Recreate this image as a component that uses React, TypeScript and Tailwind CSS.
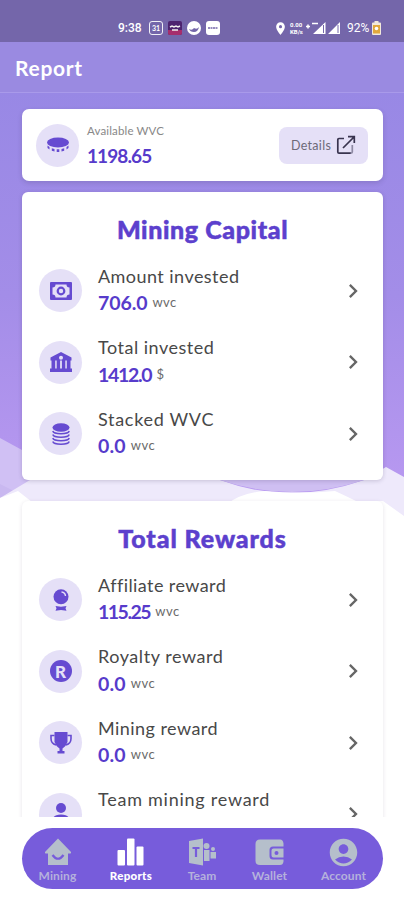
import type { ReactNode } from "react";
import { MdAccountCircle, MdChevronRight, MdLocationOn } from "react-icons/md";

type Item = { label: string; value?: string; unit?: string; icon: ReactNode; tracking: string; valueTracking?: string };

const CoinIcon = () => (
  <svg width="24" height="18" viewBox="0 0 24 18" fill="currentColor">
    <ellipse cx="12" cy="6.500" rx="11" ry="5" />
    <path d="M1.500 9.500v2.500l2 1.500v-2.500zM5.800 12.300v2.500l2.700.8v-2.500zM10.700 13.300v2.700h2.600v-2.700zM15.500 13.100v2.500l2.700-.8v-2.500zM20.500 11v2.500l2-1.500v-2.500z" />
  </svg>
);

const ShareIcon = () => (
  <svg width="20" height="20" viewBox="0 0 20 20" fill="none" stroke="#39344f" strokeWidth="1.7">
    <path d="M8 3.500H3Q1.800 3.500 1.800 4.700V17Q1.800 18.200 3 18.200H15" />
    <path d="M14.500 18.200Q16.300 18.200 16.300 17V10" stroke="#8d89a3" />
    <path d="M7 13L18 2M12 1.700h6.300V8" />
  </svg>
);

const CashIcon = () => (
  <svg width="22" height="18" viewBox="0 0 22 18">
    <rect width="22" height="18" rx="1" fill="#664bd1" />
    <path d="M5.500 2.500h11a3 3 0 0 0 3 3v7a3 3 0 0 0-3 3h-11a3 3 0 0 0-3-3v-7a3 3 0 0 0 3-3z" fill="#e5e0f7" />
    <circle cx="11" cy="9" r="3.300" fill="none" stroke="#664bd1" strokeWidth="2.200" />
  </svg>
);

const BankIcon = () => (
  <svg width="22" height="20" viewBox="0 0 22 20" fill="currentColor">
    <path fillRule="evenodd" d="M11 0L21.500 5.500V8.500H.5V5.500zM11 3.700a2 2 0 1 0 0 4 2 2 0 0 0 0-4z" />
    <path d="M1.500 8h3.700v9H1.500zM6.700 8h3.400v9H6.700zM11.900 8h3.400v9h-3.400zM16.800 8h3.700v9h-3.700zM0 16.500h22V20H0z" />
  </svg>
);

const StackIcon = () => (
  <svg width="18" height="22" viewBox="0 0 18 22" fill="none" stroke="currentColor" strokeWidth="1.500">
    <ellipse cx="9" cy="4.500" rx="8.500" ry="4.300" fill="currentColor" stroke="none" />
    <path d="M.8 8c1 3.600 15.400 3.600 16.400 0M.8 11.500c1 3.600 15.400 3.600 16.400 0M.8 15c1 3.600 15.400 3.600 16.400 0M.8 18.500c1 3.600 15.400 3.600 16.400 0" />
  </svg>
);

const BadgeIcon = () => (
  <svg width="16" height="22" viewBox="0 0 16 22" fill="currentColor">
    <circle cx="8" cy="7.700" r="7.500" />
    <path d="M8.500 3q3.700.5 4 4" fill="none" stroke="#e5e0f7" strokeWidth="1.400" />
    <path d="M2.500 17l5.500.8 5.500-.8-1 2.200 1 2.500-5.500-.8-5.500.8 1-2.500z" />
  </svg>
);

const RoyaltyIcon = () => (
  <span className="flex size-[22px] items-center justify-center rounded-full bg-[#664bd1] font-['Lato'] text-[17px] leading-none font-black text-[#e5e0f7]">
    R
  </span>
);

const TrophyIcon = () => (
  <svg width="22" height="22" viewBox="0 0 22 22" fill="currentColor">
    <path d="M4.500 0h13v10q-1.500 4.500-5 6.500v2.500h2v2.500H7.500V19h2v-2.500q-3.500-2-5-6.500z" />
    <path d="M4.500 3.500H1v3q0 5 5 6.500M17.500 3.500H21v3q0 5-5 6.500" fill="none" stroke="currentColor" strokeWidth="1.600" />
  </svg>
);

const PersonIcon = () => (
  <svg width="22" height="22" viewBox="0 0 22 22" fill="currentColor">
    <circle cx="11" cy="5" r="5" />
    <path d="M3 22v-6.500q1-4 8-4t8 4V22z" />
  </svg>
);

const capital: Item[] = [
  { label: "Amount invested", value: "706.0", unit: "wvc", icon: <CashIcon />, tracking: "tracking-[0.45px]", valueTracking: "tracking-[-0.1px]" },
  { label: "Total invested", value: "1412.0", unit: "$", icon: <BankIcon />, tracking: "tracking-[0.5px]", valueTracking: "tracking-[-1.3px]" },
  { label: "Stacked WVC", value: "0.0", unit: "wvc", icon: <StackIcon />, tracking: "tracking-[0.7px]", valueTracking: "tracking-[0.2px]" },
];

const rewards: Item[] = [
  { label: "Affiliate reward", value: "115.25", unit: "wvc", icon: <BadgeIcon />, tracking: "tracking-[0.42px]", valueTracking: "tracking-[-1.5px]" },
  { label: "Royalty reward", value: "0.0", unit: "wvc", icon: <RoyaltyIcon />, tracking: "tracking-[0.55px]", valueTracking: "tracking-[0.2px]" },
  { label: "Mining reward", value: "0.0", unit: "wvc", icon: <TrophyIcon />, tracking: "tracking-[0.45px]", valueTracking: "tracking-[0.2px]" },
  { label: "Team mining reward", icon: <PersonIcon />, tracking: "tracking-[0.75px]" },
];

function Row({ item }: { item: Item }) {
  return (
    <div className="flex h-[71.5px] items-center pr-[16px] pl-[17px]">
      <div className="flex size-[43px] shrink-0 items-center justify-center rounded-full bg-[#e5e0f7] text-[#664bd1]">
        {item.icon}
      </div>
      <div className="ml-4 h-[54px] flex-1 whitespace-nowrap">
        <div className={`text-[18px] leading-[25px] text-[#484848] ${item.tracking}`}>{item.label}</div>
        {item.value && (
          <div className="flex h-[28px] items-center">
            <span className={`text-[19.5px] font-bold text-[#573bcb] ${item.valueTracking}`}>{item.value}</span>
            <span className="ml-[5px] text-[13px] tracking-[0.5px] text-[#6a6a6a]">{item.unit}</span>
          </div>
        )}
      </div>
      <MdChevronRight size={28} className="text-[#666]" />
    </div>
  );
}

const navItems = [
  {
    label: "Mining",
    width: "w-[71px]",
    icon: (
      <svg width="28" height="28" viewBox="0 0 28 28" fill="#b5bfcb">
        <path d="M14 .5L27 14q.5 1.500-1 1.500h-2V27H4V15.500H2q-1.500 0-1-1.500z" />
        <path d="M8.500 17q5.500 7.500 11 0" fill="none" stroke="#775cdb" strokeWidth="2.200" />
      </svg>
    ),
  },
  {
    label: "Reports",
    width: "w-[76px]",
    icon: (
      <svg width="28" height="28" viewBox="0 0 28 28" fill="#fff">
        <rect x="0.500" y="12" width="7.500" height="15.500" rx="1" />
        <rect x="10" y="0.500" width="7.500" height="27" rx="1" />
        <rect x="19.500" y="8.500" width="7" height="19" rx="1" />
      </svg>
    ),
  },
  {
    label: "Team",
    width: "w-[66px]",
    icon: (
      <svg width="29" height="28" viewBox="0 0 29 28" fill="#b5bfcb">
        <path d="M1 3L15 .5v27L1 25z" />
        <path d="M4.500 10h7M8 10v9" stroke="#775cdb" strokeWidth="2.200" />
        <circle cx="18.500" cy="8" r="3" />
        <path d="M16 12h5.500v11h-5.500zM22.500 14h5.500v6.500h-5.500z" />
        <circle cx="25" cy="11" r="2" />
      </svg>
    ),
  },
  {
    label: "Wallet",
    width: "w-[69px]",
    icon: (
      <svg width="29" height="28" viewBox="0 0 29 28" fill="#b5bfcb">
        <path d="M5 1.500h20q3 0 3.500 4v3H18q-3.500 0-3.500 3.500v6Q14.500 21.500 18 21.500h10.500v2q-.5 3.500-3.500 3.500H5q-4.500 0-4.500-4v-17Q.5 1.500 5 1.500z" />
        <path fillRule="evenodd" d="M18.500 10.500h10v9h-10q-2 0-2-2v-5q0-2 2-2zM21.500 13a2 2 0 1 0 0 4 2 2 0 0 0 0-4z" />
      </svg>
    ),
  },
  { label: "Account", width: "w-[79px]", icon: <MdAccountCircle size={33} className="-m-[2.5px] text-[#b5bfcb]" /> },
];

export default function App() {
  return (
    <div className="relative flex h-[900px] w-[404px] flex-col overflow-hidden bg-white font-['Lato',sans-serif]">
      {/* Wave backdrop */}
      <svg className="absolute inset-0" width="404" height="900" viewBox="0 0 404 900">
        <defs>
          <linearGradient id="sky" gradientUnits="userSpaceOnUse" x1="0" y1="90" x2="0" y2="500">
            <stop offset="0" stopColor="#9888e5" />
            <stop offset="0.500" stopColor="#a38de8" />
            <stop offset="1" stopColor="#b999f1" />
          </linearGradient>
        </defs>
        <path d="M0 0H404V478L300 520H220L0 505z" fill="url(#sky)" />
        <path d="M0 438L22 450L44 470V490L0 505z" fill="#d0c0f4" />
        <path d="M0 484L22 495V520H0z" fill="#c9b8f0" />
        <path d="M0 498L30 480H220Q290 506 364 480L386 467L404 477V520H0z" fill="#eee9fb" />
        <path d="M220 480H364Q292 504 220 480z" fill="#cfbff2" />
        <path d="M0 498L18 491L32 502V505H226Q240 493 265 491Q300 494 335 491Q348 497 356 501H383L404 516V900H0z" fill="#fff" />
      </svg>

      {/* Status bar */}
      <div className="relative flex h-[42px] shrink-0 items-start bg-[#7466aa] pt-5 pl-[118px] text-white">
        <span className="mr-[6px] w-[25px] font-['Roboto'] text-[12px] leading-[16px] font-medium">9:38</span>
        <div className="mt-px flex gap-[5px]">
          <span className="flex size-[14px] items-center justify-center rounded-[3px] border-[1.5px] border-white/90 text-[7px] font-bold">31</span>
          <svg width="14" height="14" viewBox="0 0 14 14">
            <rect width="14" height="14" rx="2" fill="#4c236f" />
            <path d="M0 9h14v3q0 2-2 2H2q-2 0-2-2z" fill="#a62d6c" />
            <path d="M2 6l2-1 2 1 2-1 2 1 2-1M4 9h6" stroke="#eee" strokeWidth="1.500" fill="none" />
          </svg>
          <svg width="14" height="14" viewBox="0 0 14 14">
            <circle cx="7" cy="7" r="7" fill="#fff" />
            <path d="M2 8q3 2 5-1 3 2 5-1-1 5-5 5-4 0-5-3z" fill="#7466aa" />
          </svg>
          <svg width="14" height="14" viewBox="0 0 14 14">
            <rect width="14" height="14" rx="3" fill="#fff" />
            <path d="M2 7h10" stroke="#7466aa" strokeWidth="1.500" strokeDasharray="2 .500" />
          </svg>
        </div>
        <div className="ml-[53px] flex h-4 items-center">
          <MdLocationOn size={15} />
          <div className="ml-[2px] w-[14px] font-['Roboto'] text-[6px] leading-[7px] font-bold">
            <div>0.00</div>
            <div>KB/s</div>
          </div>
          <svg width="40" height="14" viewBox="0 0 40 14" fill="#fff">
            <path d="M2 5.500h4M4 3.500v4M8 2.500h6" stroke="#fff" strokeWidth="1.500" />
            <path d="M21.500 1v12H9zM36 1v12H24z" />
            <path d="M19.500 4v8M34 4v8" stroke="#7466aa" strokeWidth="1" />
          </svg>
          <span className="ml-[3px] w-[25px] font-['Roboto'] text-[12px]">92%</span>
          <svg width="9" height="14" viewBox="0 0 9 14">
            <path d="M2.500 0h4v1.500H8q1 0 1 1V13q0 1-1 1H1q-1 0-1-1V2.500q0-1 1-1h1.500z" fill="#f2e9dc" />
            <rect x="1" y="4" width="7" height="8.500" fill="#e2a83c" />
            <circle cx="4.500" cy="7.500" r="1.800" fill="#fff" />
          </svg>
        </div>
      </div>

      {/* Header */}
      <header className="relative flex h-[51px] shrink-0 items-center border-b border-[#a99aea] bg-[#9a8ae1] pt-[2px] pl-[15px]">
        <h1 className="text-[21px] font-bold tracking-[0.7px] text-white">Report</h1>
      </header>

      {/* Scrollable content */}
      <main className="relative flex h-[724px] shrink-0 flex-col overflow-hidden pt-4 pr-[21px] pl-[22px]">
        <section className="flex h-[72px] shrink-0 items-center rounded-[7px] bg-white pr-[15px] pl-[14px] shadow-[0_2px_5px_rgba(60,50,90,0.2)]">
          <div className="flex size-[43px] items-center justify-center rounded-full bg-[#e5e0f7] text-[#664bd1]">
            <CoinIcon />
          </div>
          <div className="ml-2 flex-1 pt-[4px] whitespace-nowrap">
            <div className="text-[11.5px] leading-[18px] tracking-[0.15px] text-[#888]">Available WVC</div>
            <div className="text-[19px] leading-[32px] font-bold tracking-[-0.9px] text-[#573bcb]">1198.65</div>
          </div>
          <button className="flex h-[37px] w-[89px] items-center justify-between rounded-[8px] bg-[#e5e0f7] pr-[12px] pl-[12px] text-[12.500px] tracking-[0.3px] text-[#6d6a78]">
            <span className="pt-[2px]">Details</span>
            <ShareIcon />
          </button>
        </section>

        <section className="mt-[11px] h-[288px] shrink-0 rounded-[6px] bg-white shadow-[0_1px_4px_rgba(60,50,90,0.22)]">
          <h2 className="flex h-[63px] items-center justify-center pt-[13px] text-[25px] font-black tracking-[0.6px] text-[#5c40cd] [-webkit-text-stroke:0.5px_#5c40cd]">
            Mining Capital
          </h2>
          {capital.map((item) => (
            <Row key={item.label} item={item} />
          ))}
        </section>

        <section className="mt-[21px] h-[360px] shrink-0 rounded-[6px] bg-white shadow-[0_1px_4px_rgba(60,50,90,0.13)]">
          <h2 className="flex h-[63px] items-center justify-center pt-[13px] text-[25px] font-black tracking-[0.9px] text-[#5c40cd] [-webkit-text-stroke:0.5px_#5c40cd]">
            Total Rewards
          </h2>
          {rewards.map((item) => (
            <Row key={item.label} item={item} />
          ))}
        </section>
      </main>

      {/* Bottom navigation */}
      <nav className="relative mr-[21px] ml-[22px] mt-[11px] flex h-[61px] shrink-0 rounded-full bg-[#775cdb]">
        {navItems.map((item) => (
          <div key={item.label} className={`flex flex-col items-center pt-[10px] ${item.width}`}>
            {item.icon}
            <span
              className={
                item.label === "Reports"
                  ? "mt-[2px] text-[11.5px] leading-4 font-black tracking-[0.3px] text-white"
                  : "mt-[2px] text-[12px] leading-4 font-bold tracking-[0.1px] text-[#b5b1dc]"
              }
            >
              {item.label}
            </span>
          </div>
        ))}
      </nav>
    </div>
  );
}
